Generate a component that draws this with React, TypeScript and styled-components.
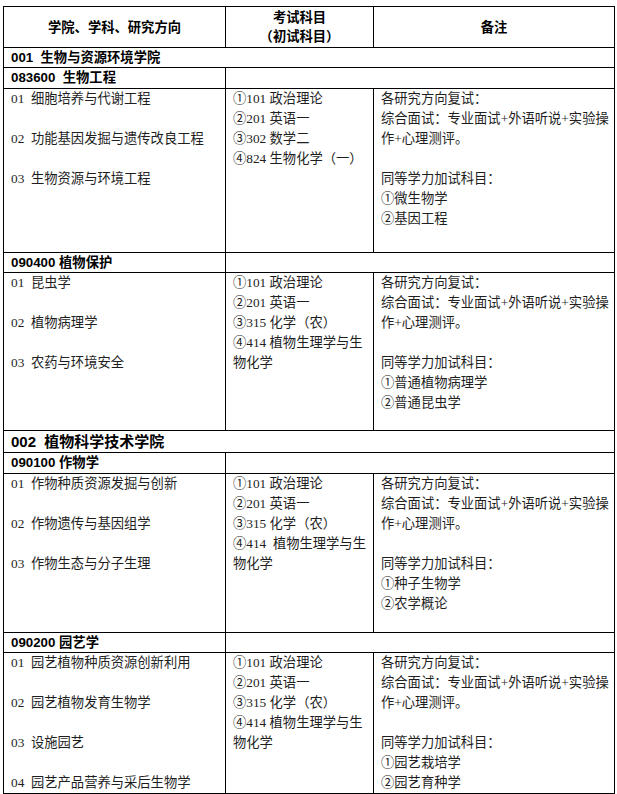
import { createGlobalStyle } from 'styled-components';
import styled from 'styled-components';

const GlobalStyle = createGlobalStyle`
  html, body {
    margin: 0;
    padding: 0;
    background: #fff;
  }
  body {
    padding: 6px 0 0 3px;
  }
`;

type Major = {
  code: string;
  height: number;
  directions: string[];
  exams: string[];
  extra: string[];
};

type School = {
  name: string;
  big?: boolean;
  majors: Major[];
};

const retest = '各研究方向复试：';
const interview = '综合面试：专业面试+外语听说+实验操作+心理测评。';
const extraTitle = '同等学力加试科目：';

const schools: School[] = [
  {
    name: '001  生物与资源环境学院',
    majors: [
      {
        code: '083600  生物工程',
        height: 164,
        directions: ['01  细胞培养与代谢工程', '02  功能基因发掘与遗传改良工程', '03  生物资源与环境工程'],
        exams: ['①101 政治理论', '②201 英语一', '③302 数学二', '④824 生物化学（一）'],
        extra: ['①微生物学', '②基因工程'],
      },
      {
        code: '090400 植物保护',
        height: 158,
        directions: ['01  昆虫学', '02  植物病理学', '03  农药与环境安全'],
        exams: ['①101 政治理论', '②201 英语一', '③315 化学（农）', '④414 植物生理学与生物化学'],
        extra: ['①普通植物病理学', '②普通昆虫学'],
      },
    ],
  },
  {
    name: '002  植物科学技术学院',
    big: true,
    majors: [
      {
        code: '090100 作物学',
        height: 159,
        directions: ['01  作物种质资源发掘与创新', '02  作物遗传与基因组学', '03  作物生态与分子生理'],
        exams: ['①101 政治理论', '②201 英语一', '③315 化学（农）', '④414  植物生理学与生物化学'],
        extra: ['①种子生物学', '②农学概论'],
      },
      {
        code: '090200 园艺学',
        height: 140,
        directions: ['01  园艺植物种质资源创新利用', '02  园艺植物发育生物学', '03  设施园艺', '04  园艺产品营养与采后生物学'],
        exams: ['①101 政治理论', '②201 英语一', '③315 化学（农）', '④414 植物生理学与生物化学'],
        extra: ['①园艺栽培学', '②园艺育种学'],
      },
    ],
  },
];

const Table = styled.table`
  width: 611px;
  border-collapse: collapse;
  table-layout: fixed;
  font-family: 'Liberation Serif', 'Noto Sans CJK SC', serif;
  font-size: 13.3px;
  color: #1e1e1e;
`;

const Row = styled.tr<{ $h: number }>`
  height: ${(p) => p.$h}px;
`;

const HeadCell = styled.th`
  border: 1px solid #000;
  padding: 0 4px;
  vertical-align: middle;
  text-align: center;
  font-family: 'Liberation Sans', 'Noto Sans CJK SC', sans-serif;
  font-weight: 700;
  font-size: 13.3px;
  line-height: 19px;
  color: #000;
`;

const TitleCell = styled.td<{ $big?: boolean }>`
  border: 1px solid #000;
  padding: 0 7px;
  vertical-align: middle;
  font-family: 'Liberation Sans', 'Noto Sans CJK SC', sans-serif;
  font-weight: 700;
  font-size: ${(p) => (p.$big ? '15px' : '13.3px')};
  line-height: 18px;
  color: #000;
  white-space: pre;
`;

const BodyCell = styled.td`
  border: 1px solid #000;
  padding: 0 4px 0 7px;
  vertical-align: top;
  line-height: 20px;
`;

const Directions = styled.div`
  display: flex;
  flex-direction: column;
  gap: 20px;
  white-space: pre;
`;

const Line = styled.div<{ $gap?: boolean }>`
  white-space: pre-wrap;
  margin-top: ${(p) => (p.$gap ? '20px' : '0')};
`;

export default function App() {
  return (
    <>
      <GlobalStyle />
      <Table>
        <colgroup>
          <col style={{ width: 222 }} />
          <col style={{ width: 148 }} />
          <col style={{ width: 241 }} />
        </colgroup>
        <tbody>
          <Row $h={41}>
            <HeadCell>学院、学科、研究方向</HeadCell>
            <HeadCell>
              考试科目
              <br />
              （初试科目）
            </HeadCell>
            <HeadCell>备注</HeadCell>
          </Row>
          {schools.map((s) => (
            <SchoolRows key={s.name} school={s} />
          ))}
        </tbody>
      </Table>
    </>
  );
}

function SchoolRows({ school }: { school: School }) {
  return (
    <>
      <Row $h={school.big ? 22 : 20}>
        <TitleCell colSpan={3} $big={school.big}>
          {school.name}
        </TitleCell>
      </Row>
      {school.majors.map((m, i) => (
        <MajorRows key={m.code} major={m} first={i === 0} />
      ))}
    </>
  );
}

function MajorRows({ major, first }: { major: Major; first: boolean }) {
  return (
    <>
      <Row $h={first ? 21 : 20}>
        <TitleCell>{major.code}</TitleCell>
        <TitleCell colSpan={2} />
      </Row>
      <Row $h={major.height}>
        <BodyCell>
          <Directions>
            {major.directions.map((d) => (
              <div key={d}>{d}</div>
            ))}
          </Directions>
        </BodyCell>
        <BodyCell>
          {major.exams.map((e) => (
            <Line key={e}>{e}</Line>
          ))}
        </BodyCell>
        <BodyCell>
          <Line>{retest}</Line>
          <Line>{interview}</Line>
          <Line $gap>{extraTitle}</Line>
          {major.extra.map((x) => (
            <Line key={x}>{x}</Line>
          ))}
        </BodyCell>
      </Row>
    </>
  );
}
